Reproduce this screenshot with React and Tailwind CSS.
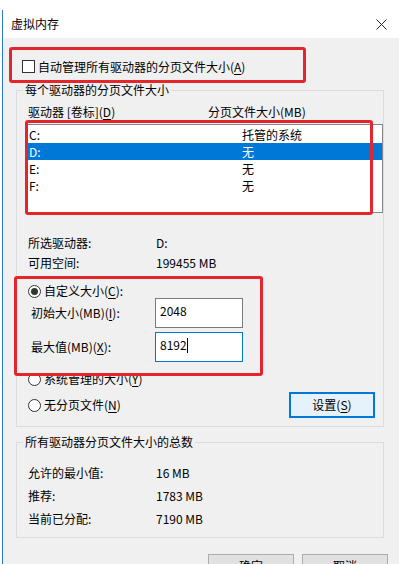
import React from "react";

const font = { fontFamily: '"Noto Sans CJK SC", "Microsoft YaHei", sans-serif' };

function U({ children }) {
  return <span className="underline underline-offset-2 decoration-[1px]">{children}</span>;
}

function Radio({ checked }) {
  return (
    <div className="w-[13px] h-[13px] rounded-full border border-[#333333] bg-white flex items-center justify-center shrink-0">
      {checked && <div className="w-[7px] h-[7px] rounded-full bg-[#333333]" />}
    </div>
  );
}

export default function App() {
  const rows = [
    ["C:", "托管的系统", false],
    ["D:", "无", true],
    ["E:", "无", false],
    ["F:", "无", false],
  ];
  return (
    <div
      className="relative w-[399px] h-[564px] overflow-hidden bg-white flex text-[12px] leading-[16px] text-black"
      style={font}
    >
      <div className="w-[2px] shrink-0" />
      <div className="w-[1px] shrink-0 mt-[10px] bg-[#2b79d0]" />
      <div className="flex-1 flex flex-col">
        {/* title bar */}
        <div className="h-[38px] pt-[10px] bg-white shrink-0">
          <div className="h-[28px] flex items-center justify-between pl-[8px] pr-[12px]">
            <span className="text-[12px]">虚拟内存</span>
            <svg width="11" height="11" viewBox="0 0 11 11">
              <path d="M0.5 0.5 L10.5 10.5 M10.5 0.5 L0.5 10.5" stroke="#222" strokeWidth="1" />
            </svg>
          </div>
        </div>
        {/* body */}
        <div className="flex-1 bg-[#f0f0f0] flex flex-col">
          <div className="mt-[22px] h-[13px] flex items-center pl-[19px] gap-[3px]">
            <div className="w-[13px] h-[13px] border border-[#333333] bg-white shrink-0" />
            <span className="whitespace-nowrap">
              自动管理所有驱动器的分页文件大小(<U>A</U>)
            </span>
          </div>

          <fieldset className="mt-[9px] ml-[13px] w-[368px] border border-[#dcdcdc] px-0 pb-[8px]">
            <legend className="ml-[6px] px-[2px] leading-[16px]">每个驱动器的分页文件大小</legend>
            <div className="mt-[6px] h-[16px] flex items-center pl-[11px]">
              <span className="w-[180px] whitespace-nowrap">
                驱动器 [卷标](<U>D</U>)
              </span>
              <span className="whitespace-nowrap">分页文件大小(MB)</span>
            </div>
            <div className="mt-[4px] ml-[9px] h-[89px] border border-[#828790] bg-white pt-[1px]">
              {rows.map(([d, v, sel]) => (
                <div
                  key={d}
                  className={
                    "h-[17px] flex items-center pl-[2px] " +
                    (sel ? "bg-[#0078d7] text-white" : "")
                  }
                >
                  <span className="w-[213px]">{d}</span>
                  <span>{v}</span>
                </div>
              ))}
            </div>
            <div className="mt-[20px] h-[20px] flex items-center pl-[11px]">
              <span className="w-[128px]">所选驱动器:</span>
              <span>D:</span>
            </div>
            <div className="h-[20px] flex items-center pl-[11px]">
              <span className="w-[128px]">可用空间:</span>
              <span>199455 MB</span>
            </div>
            <div className="mt-[11px] h-[14px] flex items-center pl-[11px] gap-[3px]">
              <Radio checked />
              <span className="whitespace-nowrap">
                自定义大小(<U>C</U>):
              </span>
            </div>
            <div className="h-[30px] flex items-center pl-[14px]">
              <span className="w-[124px] whitespace-nowrap">
                初始大小(MB)(<U>I</U>):
              </span>
              <div className="w-[88px] h-[30px] border border-[#7a7a7a] bg-white pl-[4px] pt-[4px]">
                2048
              </div>
            </div>
            <div className="mt-[4px] h-[30px] flex items-center pl-[14px]">
              <span className="w-[124px] whitespace-nowrap">
                最大值(MB)(<U>X</U>):
              </span>
              <div className="w-[88px] h-[30px] border border-[#0078d7] bg-white pl-[4px] pt-[4px] flex items-start">
                <span>8192</span>
                <span className="w-[1px] h-[15px] bg-black mt-[1px]" />
              </div>
            </div>
            <div className="mt-[10px] h-[14px] flex items-center pl-[11px] gap-[3px]">
              <Radio />
              <span className="whitespace-nowrap">
                系统管理的大小(<U>Y</U>)
              </span>
            </div>
            <div className="mt-[6px] h-[26px] flex items-center justify-between pl-[11px] pr-[8px]">
              <div className="flex items-center gap-[3px]">
                <Radio />
                <span className="whitespace-nowrap">
                  无分页文件(<U>N</U>)
                </span>
              </div>
              <div className="w-[86px] h-[26px] border-2 border-[#0078d7] bg-[#e5f1fb] flex items-center justify-center">
                <span>
                  设置(<U>S</U>)
                </span>
              </div>
            </div>
          </fieldset>

          <fieldset className="mt-[7px] ml-[13px] w-[368px] border border-[#dcdcdc] px-0 pb-[7px]">
            <legend className="ml-[6px] px-[2px] leading-[16px]">所有驱动器分页文件大小的总数</legend>
            <div className="mt-[11px] h-[23px] flex items-center pl-[11px]">
              <span className="w-[128px]">允许的最小值:</span>
              <span>16 MB</span>
            </div>
            <div className="h-[23px] flex items-center pl-[11px]">
              <span className="w-[128px]">推荐:</span>
              <span>1783 MB</span>
            </div>
            <div className="h-[23px] flex items-center pl-[11px]">
              <span className="w-[128px]">当前已分配:</span>
              <span>7190 MB</span>
            </div>
          </fieldset>

          <div className="mt-[16px] flex justify-end gap-[8px] pr-[11px]">
            <div className="w-[86px] h-[23px] border border-[#adadad] bg-[#e1e1e1] flex items-center justify-center">
              确定
            </div>
            <div className="w-[86px] h-[23px] border border-[#adadad] bg-[#e1e1e1] flex items-center justify-center">
              取消
            </div>
          </div>
        </div>
      </div>

      {/* red annotation boxes */}
      <div className="absolute left-[9px] top-[47px] w-[297px] h-[36px] border-[3px] border-[#e3262b] rounded-[3px]" />
      <div className="absolute left-[25px] top-[120px] w-[348px] h-[95px] border-[3px] border-[#e3262b] rounded-[3px]" />
      <div className="absolute left-[14px] top-[276px] w-[249px] h-[100px] border-[3px] border-[#e3262b] rounded-[3px]" />
    </div>
  );
}
